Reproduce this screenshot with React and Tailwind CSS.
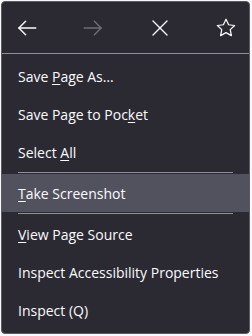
import React from 'react';

function Key({ children }) {
  return <span className="underline underline-offset-2 decoration-1">{children}</span>;
}

function MenuItem({ children, active }) {
  return (
    <div
      className={`h-[38px] flex items-center pl-[16px] text-[14px] text-[#fbfbfe] ${
        active ? 'bg-[#52525e]' : ''
      }`}
    >
      <span>{children}</span>
    </div>
  );
}

function Separator() {
  return <div className="mx-[16px] my-[1px] h-px bg-[#8f8f9d]" />;
}

export default function App() {
  return (
    <div
      className="w-[252px] h-[336px] bg-[#f9f9fb] p-[1px] overflow-hidden"
      style={{ fontFamily: '"Open Sans", "Noto Sans", sans-serif' }}
    >
      <div className="h-[333px] w-[249px] rounded-[4px] border border-[#5b5b66] bg-[#2b2a33] flex flex-col">
        {/* Nav buttons */}
        <div className="h-[51px] flex items-center justify-between pl-[15px] pr-[13px]">
          <svg width="20" height="20" viewBox="0 0 16 16" fill="none" stroke="#fbfbfe" strokeWidth="1.1" strokeLinecap="round" strokeLinejoin="round">
            <path d="M15 8H1.5" />
            <path d="M6.9 2.6 1.5 8 6.9 13.4" />
          </svg>
          <svg width="20" height="20" viewBox="0 0 16 16" fill="none" stroke="#6f6e76" strokeWidth="1.1" strokeLinecap="round" strokeLinejoin="round">
            <path d="M1 8h13.5" />
            <path d="M9.1 2.6 14.5 8 9.1 13.4" />
          </svg>
          <svg width="20" height="20" viewBox="0 0 16 16" fill="none" stroke="#fbfbfe" strokeWidth="1.1" strokeLinecap="round">
            <path d="M2.4 2.4l11.2 11.2" />
            <path d="M13.6 2.4 2.4 13.6" />
          </svg>
          <svg width="20" height="20" viewBox="0 0 16 16" fill="none" stroke="#fbfbfe" strokeWidth="1" strokeLinejoin="round">
            <path d="M8 1 10.1 5.4 14.9 6 11.4 9.3 12.3 14.1 8 11.7 3.7 14.1 4.6 9.3 1.1 6 5.9 5.4Z" />
          </svg>
        </div>
        <div className="h-px bg-[#8f8f9d]" />

        <div className="pt-[3px] flex flex-col">
          <MenuItem>
            Save <Key>P</Key>age As…
          </MenuItem>
          <MenuItem>
            Save Page to Poc<Key>k</Key>et
          </MenuItem>
          <MenuItem>
            Select <Key>A</Key>ll
          </MenuItem>
          <Separator />
          <MenuItem active>
            <Key>T</Key>ake Screenshot
          </MenuItem>
          <Separator />
          <MenuItem>
            <Key>V</Key>iew Page Source
          </MenuItem>
          <MenuItem>Inspect Accessibility Properties</MenuItem>
          <MenuItem>Inspect (Q)</MenuItem>
        </div>
      </div>
    </div>
  );
}
